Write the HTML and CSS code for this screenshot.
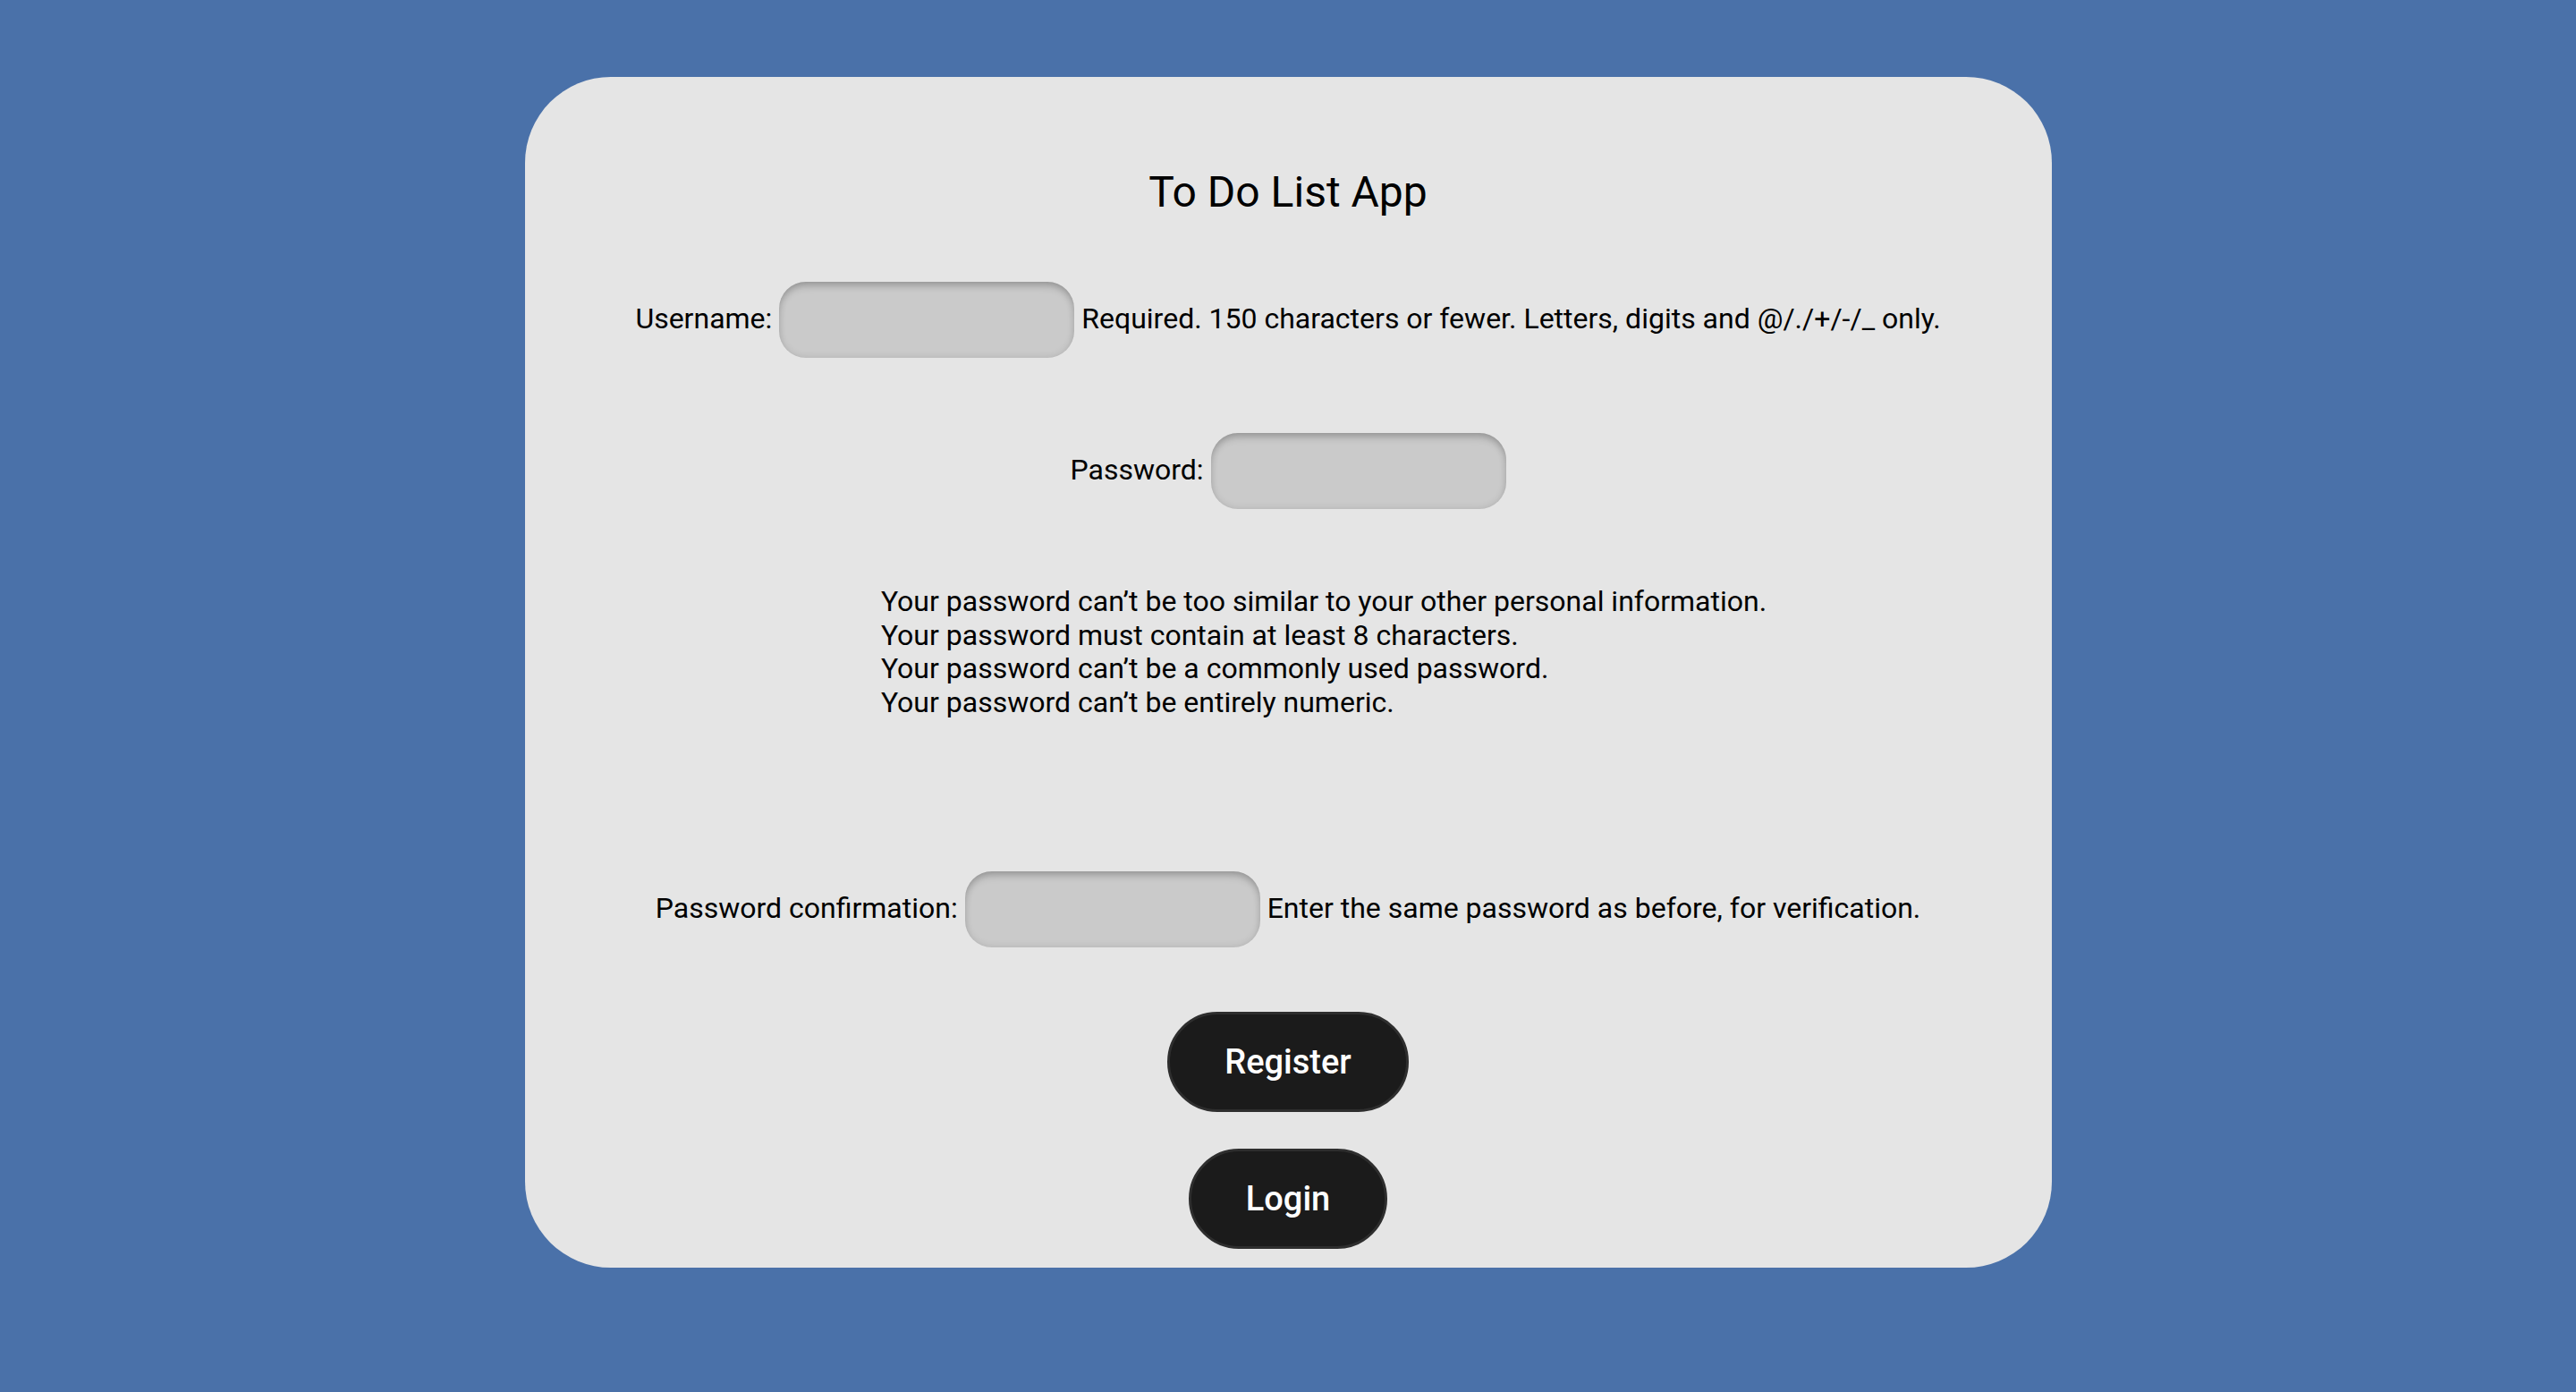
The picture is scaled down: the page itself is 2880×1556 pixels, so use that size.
FILE: index.html
```html
<!DOCTYPE html>
<html lang="en">
<head>
<meta charset="utf-8">
<title>To Do List App</title>
<link rel="stylesheet" href="styles.css">
</head>
<body>
<main class="card">
  <h2 class="title">To Do List App</h2>
  <form class="form">
    <div class="row row-user">
      <label class="label" for="u">Username:</label>
      <input class="field" id="u" type="text">
      <span class="help">Required. 150 characters or fewer. Letters, digits and @/./+/-/_ only.</span>
    </div>
    <div class="row row-pass">
      <label class="label" for="p">Password:</label>
      <input class="field" id="p" type="password">
    </div>
    <ul class="rules">
      <li>Your password can’t be too similar to your other personal information.</li>
      <li>Your password must contain at least 8 characters.</li>
      <li>Your password can’t be a commonly used password.</li>
      <li>Your password can’t be entirely numeric.</li>
    </ul>
    <div class="row row-confirm">
      <label class="label" for="c">Password confirmation:</label>
      <input class="field" id="c" type="password">
      <span class="help">Enter the same password as before, for verification.</span>
    </div>
    <button class="btn btn-register" type="button">Register</button>
    <button class="btn btn-login" type="button">Login</button>
  </form>
</main>
</body>
</html>
```
FILE: styles.css
```css
html, body {
  margin: 0;
  padding: 0;
}
body {
  background: #4a71a9;
  font-family: Roboto, "Liberation Sans", sans-serif;
  color: #000;
  min-height: 1556px;
  box-sizing: border-box;
  padding-top: 86px;
}
.card {
  width: 1707px;
  height: 1331px;
  box-sizing: border-box;
  margin: 0 auto;
  background: #e5e5e5;
  border-radius: 96px;
  padding-top: 101px;
  display: flex;
  flex-direction: column;
  align-items: center;
}
.title {
  margin: 0;
  font-size: 48px;
  font-weight: 400;
  line-height: 56px;
}
.form {
  display: flex;
  flex-direction: column;
  align-items: center;
  width: 100%;
}
.row {
  display: flex;
  align-items: center;
  justify-content: center;
  gap: 8px;
  font-size: 32px;
}
.row-user { margin-top: 72px; }
.row-pass { margin-top: 84px; }
.row-confirm { margin-top: 169px; }
.label, .help {
  white-space: nowrap;
  margin-bottom: 3px;
}
.field {
  width: 330px;
  height: 85px;
  box-sizing: border-box;
  border: none;
  border-radius: 30px;
  background: #cacaca;
  box-shadow: inset 0 7px 10px -3px rgba(0, 0, 0, 0.22), inset 0 0 8px rgba(0, 0, 0, 0.12);
  margin: 0;
  padding: 0 20px;
  font-size: 32px;
  outline: none;
}
.rules {
  list-style: none;
  margin: 85px 0 0 0;
  padding: 0 0 0 80px;
  font-size: 32px;
  line-height: 37.7px;
  align-self: center;
}
.btn {
  font-family: Roboto, "Liberation Sans", sans-serif;
  font-size: 38px;
  font-weight: 500;
  color: #fff;
  background: #1b1b1b;
  border: 3px solid #2e2e2e;
  border-radius: 60px;
  height: 112px;
  padding: 0 61px;
  cursor: pointer;
}
.btn-register { margin-top: 72px; }
.btn-login { margin-top: 41px; }
```
